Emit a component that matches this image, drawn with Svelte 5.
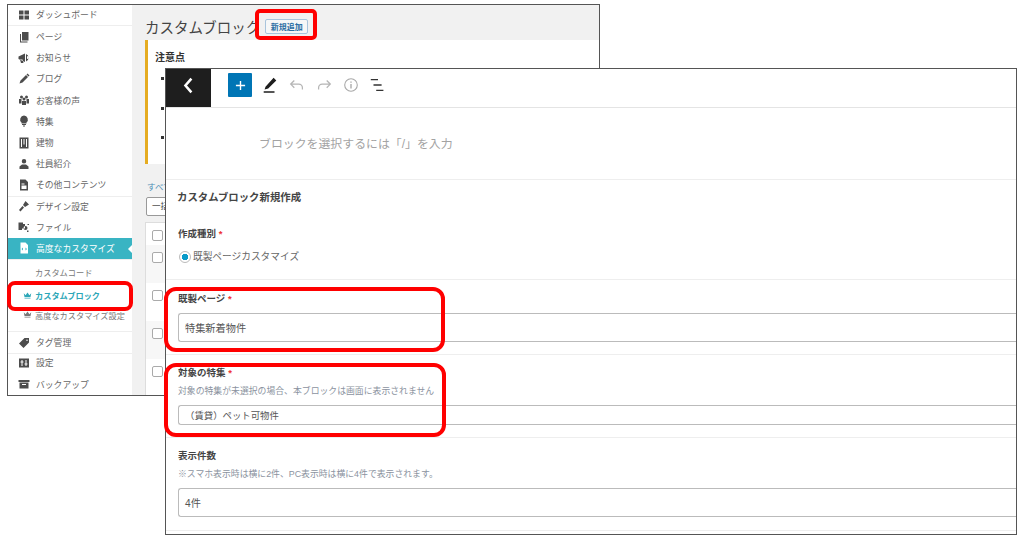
<script>
    const icons = {
        dash: 'M2 3h9v8H2zM13 3h9v8h-9zM2 13h9v8H2zM13 13h9v8h-9z',
        page: 'M8 2h13v17H8zM4 6h2v15h13v2H4z',
        news: 'M1 9l13-6v17L1 14zM4 15h5l2 7H6zM16 4a8 8 0 0 1 0 15zM18 8a3 3 0 0 1 0 6z',
        blog: 'M3 21l2-6L16 4l4 4L9 19zM17 3l2-2 4 4-2 2z',
        voice: 'M7 3a3 3 0 1 1 0 6 3 3 0 0 1 0-6zM17 3a3 3 0 1 1 0 6 3 3 0 0 1 0-6zM12 7a3 3 0 1 1 0 6 3 3 0 0 1 0-6zM2 10h5v9H2zM17 10h5v9h-5zM8 14h8v8H8z',
        bulb: 'M12 1a8 8 0 0 1 5 14v2H7v-2A8 8 0 0 1 12 1zM8 18h8v2H8zM10 21h4v2h-4z',
        building: 'M3 1h18v22H3zM6 4v16h2V4zM11 4v11h2V4zM16 4v16h2V4z',
        staff: 'M12 2a4.500 4.500 0 1 1 0 9 4.500 4.500 0 0 1 0-9zM3 22v-5l5-4h8l5 4v5z',
        other: 'M4 1h11l5 5v17H4zM7 13h10v7H7zM7 9h6v2H7z',
        design: 'M2 20l7-8 3 3-7 8zM10 10l5-8 7 7-8 5z',
        file: 'M1 3h9v3h4v9H8v3H1zM15 10a4 4 0 1 1 0 8 4 4 0 0 1 0-8zM19 6h3v2h-3zM18 19h3v3h-3z',
        code: 'M5 1h10l5 5v17H5zM10 11l-3 3 3 3zM15 11v6l3-3z',
        tag: 'M13 2h9v9L11 22 2 13zM18 5a1.500 1.500 0 1 0 0 3 1.500 1.500 0 0 0 0-3z',
        settings: 'M2 3h20v18H2zM7 6v3H5v2h2v7h2v-7h2V9H9V6zM15 6v7h-2v2h2v3h2v-3h2v-2h-2V6z',
        backup: 'M1 4h22v4H1zM3 9h18v12H3zM8 12v2h8v-2z'
    };

    const topItems = [
        ['ページ', 'page'], ['お知らせ', 'news'], ['ブログ', 'blog'], ['お客様の声', 'voice'],
        ['特集', 'bulb'], ['建物', 'building'], ['社員紹介', 'staff'], ['その他コンテンツ', 'other']
    ];
    const bottomItems = [['設定', 'settings'], ['バックアップ', 'backup']];
    const rows = [
        { h: 22 }, { h: 38 }, { h: 38 }, { h: 38 }, { h: 36 }
    ];
</script>

{#snippet navItem(label, icon)}
    <div class="nav-item">
        <svg viewBox="0 0 24 24" class="nav-icon"><path d={icons[icon]} fill-rule="evenodd" /></svg>
        <span>{label}</span>
    </div>
{/snippet}

{#snippet crown()}
    <svg viewBox="0 0 24 18" class="crown"><path d="M2 3l5 5 5-7 5 7 5-5-2 10H4zM4 15h16v2H4z" /></svg>
{/snippet}

<div class="canvas">
    <section class="window back">
        <aside class="sidebar">
            <div class="group first">{@render navItem('ダッシュボード', 'dash')}</div>
            <div class="group tight">
                {#each topItems as [label, icon]}
                    {@render navItem(label, icon)}
                {/each}
            </div>
            <div class="group">
                {@render navItem('デザイン設定', 'design')}
                {@render navItem('ファイル', 'file')}
                <div class="nav-item active">
                    <svg viewBox="0 0 24 24" class="nav-icon"><path d={icons.code} fill-rule="evenodd" /></svg>
                    <span>高度なカスタマイズ</span>
                </div>
            </div>
            <div class="submenu">
                <div class="sub-item plain">カスタムコード</div>
                <div class="sub-item current">{@render crown()}カスタムブロック</div>
                <div class="sub-item">{@render crown()}高度なカスタマイズ設定</div>
            </div>
            <div class="group tag-group">{@render navItem('タグ管理', 'tag')}</div>
            <div class="group last">
                {#each bottomItems as [label, icon]}
                    {@render navItem(label, icon)}
                {/each}
            </div>
        </aside>
        <main class="content">
            <header class="page-head">
                <h1>カスタムブロック</h1>
                <button class="add-new">新規追加</button>
            </header>
            <div class="notice">
                <h2>注意点</h2>
                <ul><li></li><li></li><li></li></ul>
            </div>
            <a class="all-link" href="#all">すべて</a>
            <div class="bulk">一括操作</div>
            <div class="table">
                {#each rows as row, i}
                    <div class="table-row" class:odd={i % 2 === 1} style="height: {row.h}px"><i class="check"></i></div>
                {/each}
            </div>
        </main>
    </section>

    <section class="window front">
        <div class="toolbar">
            <div class="back-btn">
                <svg viewBox="0 0 14 20" width="12" height="17"><path d="M11 2L4 10l7 8" fill="none" stroke="#fff" stroke-width="3" /></svg>
            </div>
            <div class="tools">
                <div class="plus">
                    <svg viewBox="0 0 12 12" width="11" height="11"><path d="M6 1v10M1 6h10" stroke="#fff" stroke-width="1.500" /></svg>
                </div>
                <svg class="tool" viewBox="0 0 20 20" width="18" height="18"><path d="M5 12L14 2l3 3-9 9-4 1zM3 17h12v1.500H3z" fill="#1e1e1e" /></svg>
                <svg class="tool" viewBox="0 0 20 20" width="18" height="18"><path d="M7 5L3 9l4 4M3 9h9a4 4 0 0 1 4 4v2" fill="none" stroke="#b5b5b5" stroke-width="1.400" /></svg>
                <svg class="tool" viewBox="0 0 20 20" width="18" height="18"><path d="M13 5l4 4-4 4M17 9H8a4 4 0 0 0-4 4v2" fill="none" stroke="#b5b5b5" stroke-width="1.400" /></svg>
                <svg class="tool" viewBox="0 0 20 20" width="18" height="18"><circle cx="10" cy="10" r="7" fill="none" stroke="#a8a8a8" stroke-width="1.200" /><path d="M10 9v5M10 6v1.600" stroke="#a8a8a8" stroke-width="1.500" /></svg>
                <svg class="tool" viewBox="0 0 20 20" width="18" height="18"><path d="M2 4h8M5 10h9M8 16h8" stroke="#333" stroke-width="1.600" /></svg>
            </div>
        </div>
        <div class="placeholder">ブロックを選択するには「/」を入力</div>
        <div class="form">
            <h3>カスタムブロック新規作成</h3>
            <div class="field kind">
                <div class="label">作成種別 <em>*</em></div>
                <label class="radio"><i></i>既製ページカスタマイズ</label>
            </div>
            <div class="field page-field">
                <div class="label">既製ページ <em>*</em></div>
                <div class="input tall">特集新着物件</div>
            </div>
            <div class="field target">
                <div class="label">対象の特集 <em>*</em></div>
                <p class="help">対象の特集が未選択の場合、本ブロックは画面に表示されません</p>
                <div class="input short">（賃貸）ペット可物件</div>
            </div>
            <div class="field count">
                <div class="label">表示件数</div>
                <p class="help">※スマホ表示時は横に2件、PC表示時は横に4件で表示されます。</p>
                <div class="input tall">4件</div>
            </div>
        </div>
    </section>

    <div class="mark m-add"></div>
    <div class="mark m-nav"></div>
    <div class="mark m-page"></div>
    <div class="mark m-target"></div>
</div>

<style>
    :global(body) {
        background: #fff;
    }
    .canvas {
        position: relative;
        width: 1024px;
        height: 542px;
        overflow: hidden;
        font-family: "Liberation Sans", "Noto Sans CJK JP", sans-serif;
        color: #444;
    }
    .window {
        position: absolute;
        box-sizing: border-box;
        border: 1px solid #555;
        background: #fff;
        overflow: hidden;
    }
    .back {
        left: 7px;
        top: 4px;
        width: 593px;
        height: 392px;
        display: flex;
    }
    .front {
        left: 165px;
        top: 68px;
        width: 852px;
        height: 467px;
    }

    /* sidebar */
    .sidebar {
        width: 124px;
        flex: none;
        font-size: 8.800px;
        color: #666;
    }
    .group {
        border-bottom: 1px solid #eee;
    }
    .group.first {
        height: 20px;
    }
    .group.first .nav-item {
        height: 19px;
    }
    .group.tight {
        margin-bottom: -1px;
    }
    .group.tag-group {
        margin-bottom: -2px;
    }
    .group.last {
        border-bottom: 0;
    }
    .nav-item {
        height: 21.200px;
        display: flex;
        align-items: center;
        gap: 6px;
        padding-left: 10px;
        position: relative;
    }
    .nav-icon {
        width: 12px;
        height: 12px;
        fill: #4c4c4c;
        flex: none;
    }
    .active {
        background: #39b4c3;
        color: #fff;
    }
    .active .nav-icon {
        fill: #fff;
    }
    .active::after {
        content: "";
        position: absolute;
        right: 0;
        top: 7px;
        border: 4px solid transparent;
        border-right-color: #fff;
        border-left-width: 0;
    }
    .submenu {
        height: 72px;
        padding-top: 1px;
        box-sizing: border-box;
        border-bottom: 1px solid #eee;
        font-size: 8.200px;
        color: #777;
    }
    .sub-item {
        height: 21.500px;
        display: flex;
        align-items: center;
        padding-left: 15px;
        gap: 3px;
    }
    .sub-item.plain {
        padding-left: 27px;
    }
    .sub-item.current {
        height: 23px;
        padding-top: 2px;
        box-sizing: border-box;
        margin-bottom: -1.500px;
        color: #2ca7b8;
        font-weight: 700;
    }
    .crown {
        width: 9px;
        height: 7px;
        fill: currentColor;
        flex: none;
    }

    /* back content */
    .content {
        flex: 1;
        background: #f1f1f1;
        padding-left: 13px;
        min-width: 0;
    }
    .page-head {
        height: 35px;
        display: flex;
        align-items: center;
        gap: 5px;
        padding-top: 7px;
        box-sizing: border-box;
    }
    .page-head h1 {
        margin: 0;
        font-size: 14.500px;
        font-weight: 400;
        color: #444;
        white-space: nowrap;
    }
    .add-new {
        border: 1px solid #a9c4dc;
        border-radius: 2px;
        background: #f6f7f7;
        color: #2b6ea3;
        font: 700 8px "Liberation Sans", "Noto Sans CJK JP", sans-serif;
        padding: 0;
        width: 43px;
        height: 15px;
    }
    .notice {
        height: 124px;
        background: #fff;
        border-left: 3px solid #e5ac22;
        margin-right: -13px;
        padding: 9px 7px;
        box-sizing: border-box;
    }
    .notice h2 {
        margin: 0;
        font-size: 10px;
        font-weight: 700;
        color: #333;
    }
    .notice ul {
        margin: 0;
        padding: 0 0 0 6px;
        list-style: none;
    }
    .notice li {
        width: 3px;
        height: 3px;
        background: #333;
        margin: 13px 0 26.500px 0;
    }
    .all-link {
        display: block;
        margin: 17px 0 0 2px;
        height: 13px;
        font-size: 8.500px;
        line-height: 13px;
        color: #4a8db5;
        text-decoration: none;
    }
    .bulk {
        margin: 3px 0 0 1px;
        height: 19px;
        width: 60px;
        box-sizing: border-box;
        border: 1px solid #999;
        border-radius: 2px;
        background: #fff;
        font-size: 8.500px;
        line-height: 17px;
        padding-left: 5px;
    }
    .table {
        margin-top: 6px;
        border: 1px solid #ddd;
        background: #fff;
    }
    .table-row {
        box-sizing: border-box;
        padding: 7px 0 0 6px;
    }
    .table-row.odd {
        background: #f7f7f7;
    }
    .check {
        display: block;
        width: 9px;
        height: 9px;
        border: 1px solid #aaa;
        border-radius: 2px;
        background: #fff;
    }

    /* editor */
    .toolbar {
        height: 38px;
        display: flex;
        border-bottom: 1px solid #e4e4e4;
    }
    .back-btn {
        width: 45px;
        background: #1e1e1e;
        display: flex;
        align-items: center;
        justify-content: center;
        margin-right: 17px;
    }
    .back-btn svg {
        margin: -6px 0 0 -1px;
    }
    .tools {
        display: flex;
        align-items: center;
        gap: 9px;
        padding-bottom: 6px;
    }
    .plus {
        width: 24px;
        height: 24px;
        border-radius: 1px;
        background: #0075b5;
        display: flex;
        align-items: center;
        justify-content: center;
    }
    .placeholder {
        height: 72px;
        box-sizing: border-box;
        padding: 28px 0 0 93px;
        font-size: 11.900px;
        line-height: 17px;
        color: #a3a3a3;
        border-bottom: 1px solid #eee;
    }
    .form h3 {
        margin: 0;
        padding: 10px 0 0 11px;
        height: 36px;
        box-sizing: border-box;
        font-size: 10.400px;
        line-height: 15px;
        font-weight: 700;
        color: #444;
    }
    .field {
        box-sizing: border-box;
        padding-left: 12px;
        border-bottom: 1px solid #eee;
    }
    .label {
        font-size: 9.500px;
        line-height: 14px;
        font-weight: 700;
        color: #444;
    }
    .label em {
        color: #e33;
        font-style: normal;
    }
    .kind {
        height: 64px;
        padding-top: 11px;
    }
    .radio {
        display: flex;
        align-items: center;
        gap: 2px;
        margin-top: 9px;
        padding-left: 1px;
        font-size: 9.700px;
        line-height: 14px;
        color: #666;
    }
    .radio i {
        width: 10px;
        height: 10px;
        border: 1px solid #bbb;
        border-radius: 50%;
        background: radial-gradient(circle, #0a9bc9 3px, #fff 3.500px);
    }
    .page-field {
        height: 75px;
        padding-top: 12px;
    }
    .target {
        height: 83px;
        padding-top: 11px;
    }
    .count {
        height: 93px;
        padding-top: 11px;
    }
    .help {
        margin: 5px 0 0;
        font-size: 8.850px;
        line-height: 13px;
        color: #8b93a0;
    }
    .input {
        box-sizing: border-box;
        border: 1px solid #bbb;
        border-right: 0;
        border-radius: 3px 0 0 3px;
        background: #fff;
        padding-left: 6px;
        color: #555;
        display: flex;
        align-items: center;
    }
    .tall {
        height: 29px;
        margin-top: 7px;
        font-size: 10.200px;
    }
    .short {
        height: 20px;
        margin-top: 7px;
        font-size: 9.400px;
    }

    /* red highlight frames */
    .mark {
        position: absolute;
        box-sizing: border-box;
        border: 4px solid #f00;
        border-radius: 8px;
    }
    .m-add {
        left: 255px;
        top: 9px;
        width: 62px;
        height: 31px;
        border-radius: 5px;
    }
    .m-nav {
        left: 7px;
        top: 281px;
        width: 126px;
        height: 30px;
    }
    .m-page {
        left: 164px;
        top: 287px;
        width: 281px;
        height: 65px;
        border-radius: 12px;
    }
    .m-target {
        left: 164px;
        top: 363px;
        width: 282px;
        height: 74px;
        border-radius: 12px;
    }
</style>
